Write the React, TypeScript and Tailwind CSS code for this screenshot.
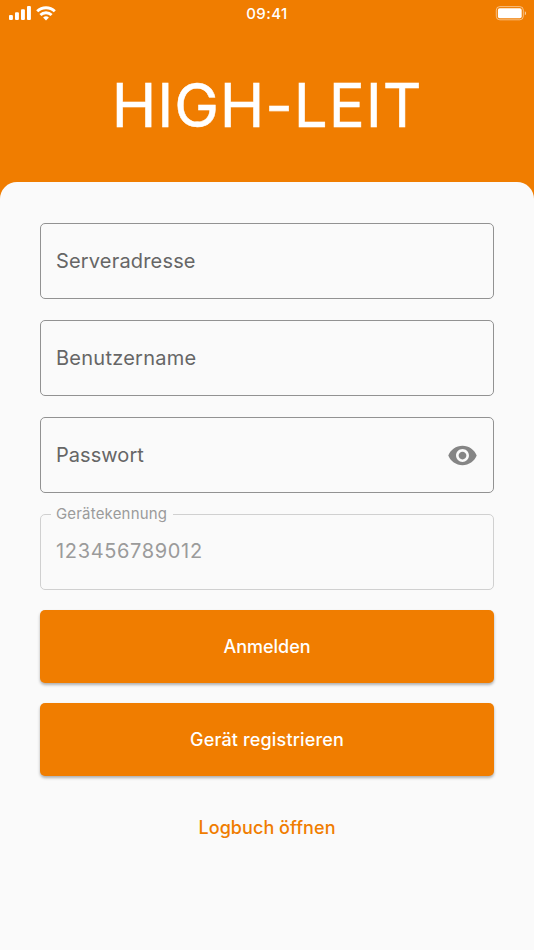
function Field({ label, tracking, password = false }: { label: string; tracking: string; password?: boolean }) {
  return (
    <div className="flex h-[76px] items-center justify-between rounded-[5px] border border-[#929292] px-[15px] text-[20px] text-[#666]">
      <span className={tracking}>{label}</span>
      {password && (
        <svg width="31" height="31" viewBox="0 0 24 24" fill="#858585">
          <path d="M12 4.5C7 4.5 2.73 7.61 1 12c1.73 4.39 6 7.5 11 7.5s9.27-3.11 11-7.5c-1.73-4.39-6-7.5-11-7.5zM12 17c-2.76 0-5-2.24-5-5s2.24-5 5-5 5 2.24 5 5-2.24 5-5 5zm0-8c-1.66 0-3 1.34-3 3s1.34 3 3 3 3-1.34 3-3-1.34-3-3-3z" />
        </svg>
      )}
    </div>
  );
}

export default function App() {
  return (
    <div className="flex h-[950px] w-[534px] flex-col overflow-hidden bg-[#f07d00] font-['Inter',sans-serif]">
      <header className="flex h-7 items-center justify-between px-2 text-white">
        <svg width="50" height="28" viewBox="0 0 50 28" fill="white">
          <rect x="1" y="15" width="3.9" height="5" rx="1" />
          <rect x="7" y="12.2" width="3.9" height="7.8" rx="1" />
          <rect x="13" y="9.3" width="3.9" height="10.7" rx="1" />
          <rect x="19" y="6" width="3.9" height="14" rx="1" />
          <g fill="none" stroke="white" strokeWidth="2.9">
            <path d="M29.2 11.3a12.7 12.7 0 0 1 17.6 0" />
            <path d="M32.4 15a8 8 0 0 1 11.2 0" />
          </g>
          <path d="M38 20.4l-2.9-2.9a4.3 4.3 0 0 1 5.8 0z" />
        </svg>
        <span className="text-[15px] font-medium tracking-[0.45px]">09:41</span>
        <svg width="50" height="28" viewBox="0 0 50 28" fill="white">
          <rect x="20.3" y="6.6" width="27" height="13.2" rx="3.5" fill="none" stroke="white" strokeOpacity=".5" />
          <rect x="21.9" y="8.2" width="23.8" height="10" rx="1.8" />
          <path d="M48.8 11.2v4c1.8-1 1.8-3 0-4z" fillOpacity=".6" />
        </svg>
      </header>
      <h1 className="flex h-[154px] items-center justify-center pb-[1px] text-[60px] leading-none tracking-[0.9px] text-white [-webkit-text-stroke:0.5px_white]">HIGH-LEIT</h1>
      <main className="flex flex-1 flex-col rounded-t-[17px] bg-[#fafafa] px-10 pt-[41px]">
        <div className="flex flex-col gap-[21px]">
          <Field label="Serveradresse" tracking="tracking-[0.17px]" />
          <Field label="Benutzername" tracking="tracking-[0.25px]" />
          <Field label="Passwort" tracking="tracking-[0.05px]" password />
        </div>
        <fieldset className="mt-[12px] h-[85px] rounded-[5px] border border-[#d0d0d0] pl-[10px] text-[20px] text-[#9b9b9b]">
          <legend className="pr-[6px] pl-[5px] text-[15px] leading-[18px] tracking-[0.18px]">Gerätekennung</legend>
          <div className="pt-[13px] pl-[5px] tracking-[0.65px]">123456789012</div>
        </fieldset>
        <button className="mt-5 h-[73px] rounded-[5px] bg-[#f07d00] text-[18px] font-medium text-white shadow-[0_2px_3px_rgba(0,0,0,0.3)]">Anmelden</button>
        <button className="mt-5 h-[73px] rounded-[5px] bg-[#f07d00] text-[18px] font-medium tracking-[0.15px] text-white shadow-[0_2px_3px_rgba(0,0,0,0.3)]">Gerät registrieren</button>
        <button className="mt-[38px] self-center text-[18px] font-medium tracking-[0.06px] text-[#f07d00]">Logbuch öffnen</button>
      </main>
    </div>
  );
}
